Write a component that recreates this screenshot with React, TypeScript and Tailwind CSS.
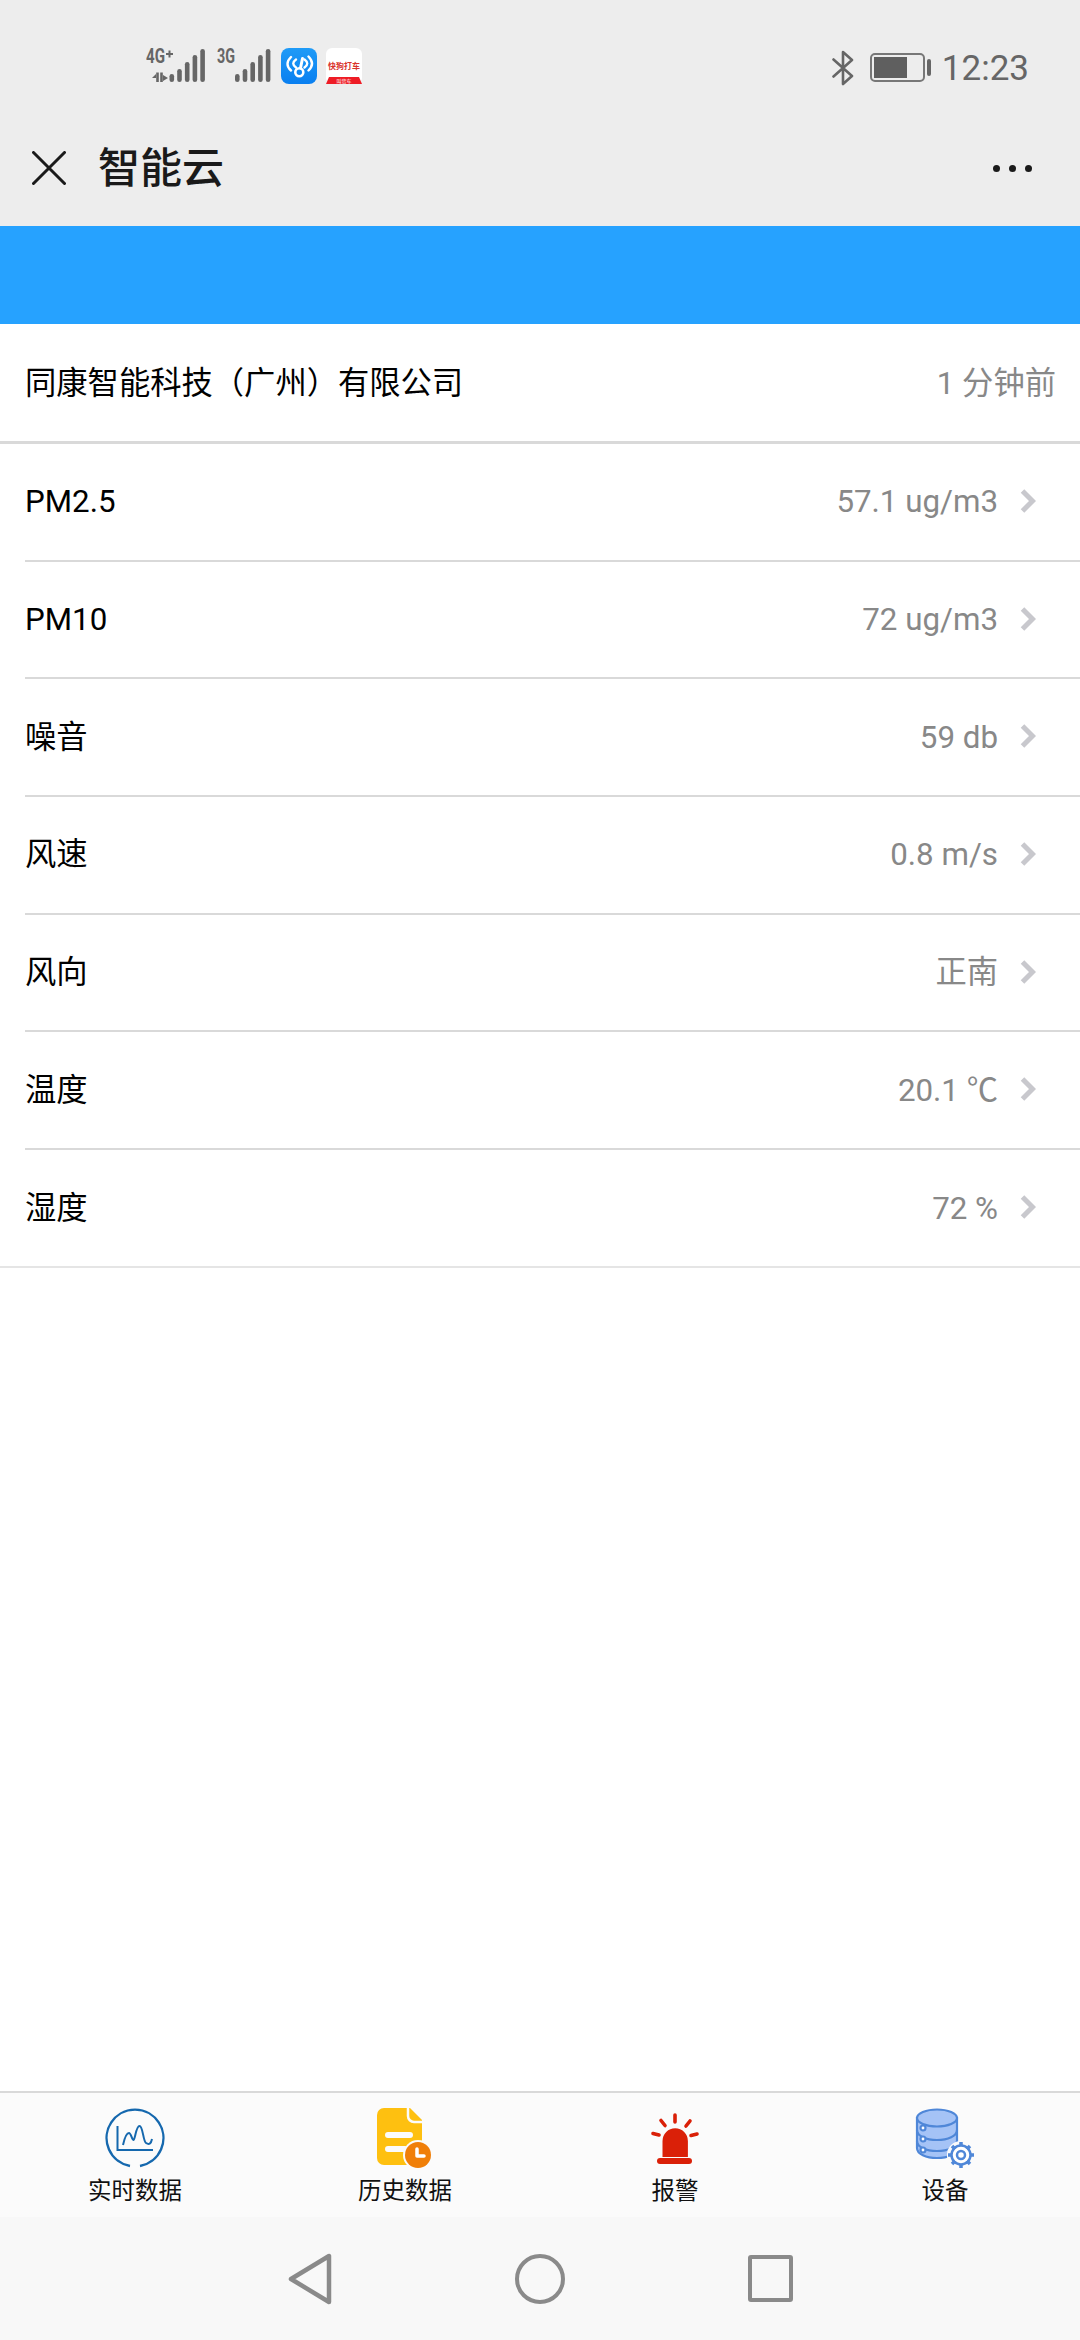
import React from 'react';

const rows = [
  { name: 'PM2.5', value: '57.1 ug/m3' },
  { name: 'PM10', value: '72 ug/m3' },
  { name: '噪音', value: '59 db' },
  { name: '风速', value: '0.8 m/s' },
  { name: '风向', value: '正南' },
  { name: '温度', value: '20.1 ℃' },
  { name: '湿度', value: '72 %' },
];

// signal bars, shortest to tallest
const Bars = ({ start }: { start: number }) => (
  <>
    {[8, 13, 20, 27, 33].map((h, i) => (
      <rect key={h} x={start + i * 7.7} y={34 - h} width="4.6" height={h} rx="2.3" fill="#666" />
    ))}
  </>
);

const Signal4G = () => (
  <svg width="60" height="42" viewBox="0 -6 60 42">
    <text x="0" y="15" fontSize="20" fontWeight="700" fill="#666" fontFamily="Roboto, sans-serif" textLength="19" lengthAdjust="spacingAndGlyphs">4G</text>
    <path d="M20 6h7M23.500 2.500v7" stroke="#666" strokeWidth="2" fill="none" />
    <path d="M6 30l4-4v4zM17 27l5 3-5 3z" fill="#666" />
    <path d="M11.500 24.500V34M15.500 24.500V34" stroke="#666" strokeWidth="2.600" fill="none" />
    <Bars start={23.500} />
  </svg>
);

const Signal3G = () => (
  <svg width="54" height="42" viewBox="0 -6 54 42">
    <text x="0" y="15" fontSize="20" fontWeight="700" fill="#666" fontFamily="Roboto, sans-serif" textLength="18" lengthAdjust="spacingAndGlyphs">3G</text>
    <Bars start={18} />
  </svg>
);

const WifiApp = () => (
  <svg width="36" height="36" viewBox="0 0 36 36">
    <defs>
      <linearGradient id="wifiBg" x1="0" y1="0" x2="0" y2="1">
        <stop offset="0" stopColor="#1f9bf7" />
        <stop offset="1" stopColor="#0a7ff0" />
      </linearGradient>
    </defs>
    <rect width="36" height="36" rx="8" fill="url(#wifiBg)" />
    <g fill="none" stroke="#fff" strokeLinecap="round">
      <path d="M10 9Q3 16 10 22.500M27.500 8.500Q34.500 15.500 27.500 22.500" strokeWidth="2.400" />
      <path d="M15 11.500Q9.500 15.500 15 19.500M23.500 11.500Q29 15.500 23.500 19.500" strokeWidth="2.400" />
      <path d="M21.500 10.500 19.500 20" strokeWidth="3" />
      <circle cx="18.300" cy="24.300" r="4" strokeWidth="2.600" />
    </g>
  </svg>
);

const CarApp = () => (
  <svg width="36" height="36" viewBox="0 0 36 36">
    <rect width="36" height="36" rx="6" fill="#fff" />
    <text x="18" y="20.500" textAnchor="middle" fontSize="8" fontWeight="700" fill="#d9322c" fontFamily="'Noto Sans CJK SC', sans-serif">快狗打车</text>
    <path d="M3 29h30l3 7H0z" fill="#ee1c25" />
    <text x="18" y="35" textAnchor="middle" fontSize="5" fill="#fff" fontFamily="'Noto Sans CJK SC', sans-serif">叫货车</text>
  </svg>
);

const Bluetooth = () => (
  <svg width="22" height="36" viewBox="0 0 22 36" fill="none" stroke="#666" strokeWidth="2.600" strokeLinejoin="round" strokeLinecap="round">
    <path d="M1.500 9.500 20 26 11 34V2l9 8L1.500 26.500" />
  </svg>
);

const Battery = () => (
  <div className="flex items-center gap-[2px]">
    <div className="w-[55px] h-[29px] rounded-[5px] border-2 border-[#777] p-[2px]">
      <div className="w-[33px] h-full bg-[#5f5f5f]" />
    </div>
    <div className="w-[4px] h-[17px] rounded-full bg-[#666]" />
  </div>
);

const Chevron = () => (
  <svg width="17" height="24" viewBox="0 0 17 24" fill="none">
    <path d="M3.500 2 13.500 12 3.500 22" stroke="#c8c8cd" strokeWidth="5" />
  </svg>
);

// tab icons
const ChartIcon = () => (
  <svg width="60" height="60" viewBox="0 0 60 60" fill="none" stroke="#1568ae">
    <path d="M25 58A28.400 28.400 0 1 1 35 58" strokeWidth="2.400" />
    <path d="M12.500 18V42H48" strokeWidth="2" />
    <path d="M18 37C20 28 22 25 24 25S27 32 28.500 32 31 18 34.500 18 38 33 41 35 46 36 47 31" strokeWidth="2" />
  </svg>
);

const HistoryIcon = () => (
  <svg width="60" height="60" viewBox="0 0 60 60">
    <path d="M9 0h26l12 12v38a7 7 0 0 1-7 7H9a7 7 0 0 1-7-7V7a7 7 0 0 1 7-7z" fill="#fec010" />
    <path d="M33 0v8a6 6 0 0 0 6 6h8" fill="none" stroke="#fbfbfb" strokeWidth="2.500" />
    <path d="M13 27H35M13 41H30" stroke="#fbfbfb" strokeWidth="6" strokeLinecap="round" />
    <circle cx="43" cy="47" r="15" fill="#fbfbfb" />
    <circle cx="43" cy="47" r="13" fill="#f07f09" />
    <path d="M42 41v7h7" fill="none" stroke="#fff" strokeWidth="3.500" strokeLinecap="round" strokeLinejoin="round" />
  </svg>
);

const AlarmIcon = () => (
  <svg width="60" height="60" viewBox="0 0 60 60" fill="#da2008">
    <path d="M17.500 49V33a12.700 12.700 0 0 1 25.400 0v16z" />
    <rect x="12" y="50" width="35" height="6" rx="3" />
    <g stroke="#da2008" strokeWidth="3.600" strokeLinecap="round">
      <path d="M30 7v7M16 12.500l4 5M45 13l-4 5M8 25.500l6 1.500M52 26l-6 1.500" />
    </g>
  </svg>
);

const DeviceIcon = () => (
  <svg width="60" height="60" viewBox="0 0 60 60" fill="none" stroke="#4f87d8" strokeWidth="2.200">
    <path d="M2 10v30c0 6 9 10 20 10s20-4 20-10V10z" fill="#a5c3f6" />
    <ellipse cx="22" cy="10" rx="20" ry="8.500" fill="#a5c3f6" />
    <path d="M2 22c0 6 9 10 20 10s20-4 20-10M2 33c0 6 9 10 20 10s20-4 20-10" />
    <circle cx="8" cy="20" r="2.500" fill="#fff" />
    <circle cx="8" cy="31" r="2.500" fill="#fff" />
    <circle cx="8" cy="42" r="2.500" fill="#fff" />
    <circle cx="46" cy="47" r="13" fill="#fbfbfb" stroke="#fbfbfb" />
    <circle cx="46" cy="47" r="9.500" fill="#fff" strokeWidth="2.500" />
    <circle cx="46" cy="47" r="4" fill="#fff" strokeWidth="2.500" />
    <path d="M46 34v4M46 56v4M33 47h4M55 47h4M37 38l3 3M52 53l3 3M37 56l3-3M52 41l3-3" strokeWidth="3.500" />
  </svg>
);

const tabs = [
  { label: '实时数据', icon: <ChartIcon /> },
  { label: '历史数据', icon: <HistoryIcon /> },
  { label: '报警', icon: <AlarmIcon /> },
  { label: '设备', icon: <DeviceIcon /> },
];

const App = () => {
  return (
    <div className="w-[1080px] h-[2340px] flex flex-col bg-white text-[31.3px] font-['Roboto','Noto_Sans_CJK_SC',sans-serif]">
      {/* Status bar + title bar */}
      <div className="bg-[#ededed] h-[226px] shrink-0 flex flex-col">
        <div className="h-[110px] pt-[42px] pl-[146px] pr-[51px] flex items-start justify-between">
          <div className="flex items-end gap-[11px]">
            <Signal4G />
            <Signal3G />
            <div className="-ml-[1px]"><WifiApp /></div>
            <div className="-ml-[2px]"><CarApp /></div>
          </div>
          <div className="flex items-center pt-[6px]">
            <Bluetooth />
            <div className="ml-[16px]"><Battery /></div>
            <span className="ml-[11px] pt-[3px] text-[35px] leading-[36px] text-[#666]">12:23</span>
          </div>
        </div>
        <div className="flex-1 flex items-center pl-[32px] pr-[48px]">
          <svg width="34" height="34" viewBox="0 0 34 34" stroke="#1a1a1a" strokeWidth="3" strokeLinecap="round">
            <path d="M1.500 1.500 32.500 32.500M32.500 1.500 1.500 32.500" />
          </svg>
          <h1 className="ml-[32px] text-[42px] font-medium text-[#1a1a1a]">智能云</h1>
          <div className="ml-auto flex gap-[9px]">
            <span className="w-[7px] h-[7px] rounded-full bg-[#1a1a1a]" />
            <span className="w-[7px] h-[7px] rounded-full bg-[#1a1a1a]" />
            <span className="w-[7px] h-[7px] rounded-full bg-[#1a1a1a]" />
          </div>
        </div>
      </div>

      <div className="bg-[#26a2ff] h-[98px] shrink-0" />

      {/* Company row */}
      <div className="h-[120px] shrink-0 pl-[25px] pr-[24px] flex items-center justify-between border-b-[3px] border-[#d9d9d9]">
        <span className="pt-[3px] text-black">同康智能科技（广州）有限公司</span>
        <span className="pt-[3px] text-[#888]">1 分钟前</span>
      </div>

      {/* Readings */}
      <div className="flex-1">
        {rows.map((row, i) => (
          <div key={row.name} className={i === rows.length - 1 ? 'pl-[25px] border-b-2 border-[#e5e5e5]' : 'pl-[25px]'}>
            <div className={i === rows.length - 1 ? 'h-[115.7px] pr-[44px] flex items-center' : 'h-[117.7px] pr-[44px] flex items-center border-b-2 border-[#d9d9d9]'}>
              <span className="pt-[2px] text-black">{row.name}</span>
              <span className="pt-[2px] ml-auto text-[#888]">{row.value}</span>
              <span className="ml-[21px] pb-[2px] flex"><Chevron /></span>
            </div>
          </div>
        ))}
      </div>

      {/* Tab bar */}
      <div className="h-[126px] shrink-0 bg-[#fbfbfb] border-t-2 border-[#d9d9d9] grid grid-cols-4">
        {tabs.map((tab) => (
          <div key={tab.label} className="flex flex-col items-center pt-[15px]">
            {tab.icon}
            <span className="text-[23.5px] leading-[30px] mt-[8px] text-[#111]">{tab.label}</span>
          </div>
        ))}
      </div>

      {/* Android nav */}
      <div className="h-[123px] shrink-0 bg-[#f8f8f8] flex items-center justify-center gap-[183px]">
        <svg width="44" height="52" viewBox="0 0 44 52" fill="none" stroke="#8a8a8a" strokeWidth="4.500" strokeLinejoin="round">
          <path d="M41 3v46L3 26z" />
        </svg>
        <div className="w-[50px] h-[50px] rounded-full border-[4.5px] border-[#8a8a8a]" />
        <div className="w-[45px] h-[47px] rounded-[3px] border-[4.5px] border-[#8a8a8a]" />
      </div>
    </div>
  );
};

export default App;
